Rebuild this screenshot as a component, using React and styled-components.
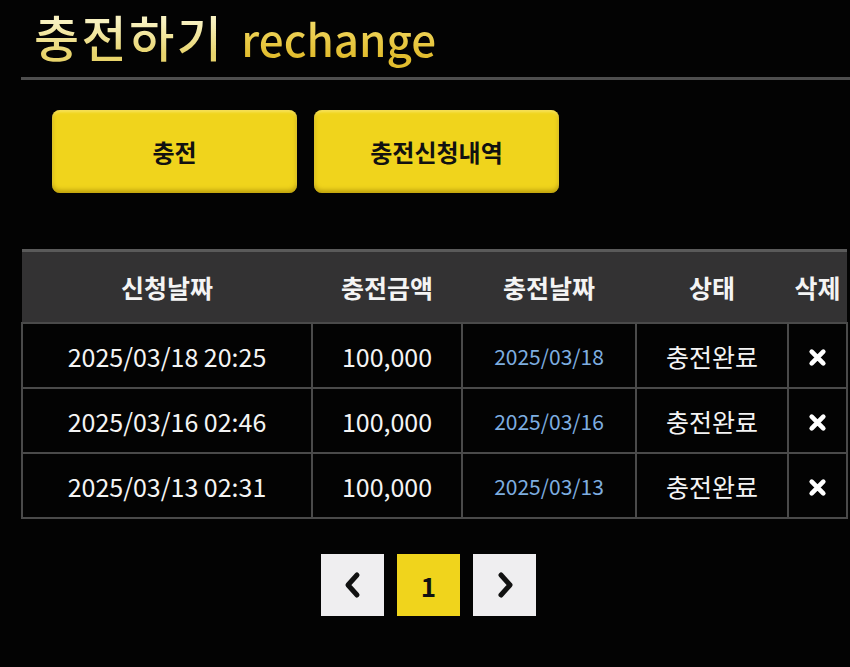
import React from "react";
import styled, { createGlobalStyle } from "styled-components";

const GlobalStyle = createGlobalStyle`
  html, body {
    margin: 0;
    padding: 0;
    background: #030303;
  }
  body {
    font-family: "Noto Sans CJK KR", "Noto Sans", sans-serif;
    color: #fff;
  }
`;

const Page = styled.div`
  width: 850px;
  min-height: 667px;
  background: #030303;
  overflow: hidden;
`;

const Header = styled.div`
  margin-left: 21px;
  padding: 0 0 3px 13px;
  border-bottom: 3px solid #4e4e4e;
`;

const Title = styled.h1`
  margin: 0;
  display: flex;
  align-items: baseline;
  gap: 17px;
  font-weight: 500;
  line-height: 72px;
`;

const TitleText = styled.span`
  font-size: ${(p) => p.$size};
  letter-spacing: ${(p) => p.$spacing || "0"};
  background: linear-gradient(180deg, ${(p) => p.$top} 30%, ${(p) => p.$bottom} 75%);
  -webkit-background-clip: text;
  background-clip: text;
  color: transparent;
`;

const ButtonRow = styled.div`
  display: flex;
  gap: 17px;
  padding: 30px 0 0 52px;
`;

const TabButton = styled.button`
  width: 245px;
  height: 83px;
  border: none;
  border-radius: 8px;
  background: #f0d41c;
  box-shadow: inset 0 -3px 4px rgba(150, 120, 0, 0.55), inset 0 2px 3px rgba(255, 240, 140, 0.6);
  color: #111;
  font-family: inherit;
  font-size: 24px;
  font-weight: 700;
  cursor: pointer;
`;

const Table = styled.table`
  margin: 56px 0 0 21px;
  width: 825px;
  border-collapse: collapse;
  table-layout: fixed;
`;

const HeadRow = styled.tr`
  background: #333233;
  border-top: 3px solid #5a5a5a;
`;

const Th = styled.th`
  height: 70px;
  padding: 0;
  font-size: 25px;
  font-weight: 700;
  color: #f4f4f4;
  text-align: center;
`;

const Td = styled.td`
  height: 63px;
  padding: 0;
  border: 2px solid #4a4a4a;
  text-align: center;
  color: ${(p) => (p.$accent ? "#7eaee0" : "#f4f4f4")};
  font-size: ${(p) => (p.$accent ? "21px" : "25px")};
`;

const Pager = styled.div`
  display: flex;
  justify-content: center;
  gap: 13px;
  margin-top: 35px;
  padding-left: 7px;
`;

const PageButton = styled.button`
  width: 63px;
  height: 62px;
  border: none;
  padding: 0;
  display: flex;
  align-items: center;
  justify-content: center;
  background: ${(p) => (p.$active ? "#f0d41c" : "#efeef0")};
  color: #111;
  font-family: inherit;
  font-size: 26px;
  font-weight: 700;
`;

const Chevron = ({ dir }) => (
  <svg width="24" height="30" viewBox="0 0 24 30">
    <path
      d={dir === "left" ? "M16 5 L7 15 L16 25" : "M8 5 L17 15 L8 25"}
      fill="none"
      stroke="#111"
      strokeWidth="5"
      strokeLinecap="round"
      strokeLinejoin="round"
    />
  </svg>
);

const DeleteIcon = () => (
  <svg width="19" height="19" viewBox="0 0 18 18">
    <path
      d="M3.5 3.5 L14.5 14.5 M14.5 3.5 L3.5 14.5"
      stroke="#fff"
      strokeWidth="4.4"
      strokeLinecap="round"
    />
  </svg>
);

const rows = [
  { requested: "2025/03/18 20:25", amount: "100,000", charged: "2025/03/18" },
  { requested: "2025/03/16 02:46", amount: "100,000", charged: "2025/03/16" },
  { requested: "2025/03/13 02:31", amount: "100,000", charged: "2025/03/13" },
];

export default function App() {
  return (
    <Page>
      <GlobalStyle />
      <Header>
        <Title>
          <TitleText $size="49px" $top="#f8f1c0" $bottom="#e8d46c" $spacing="2.5px">
            충전하기
          </TitleText>
          <TitleText $size="44px" $top="#f0d760" $bottom="#e2bd2e">
            rechange
          </TitleText>
        </Title>
      </Header>

      <ButtonRow>
        <TabButton>충전</TabButton>
        <TabButton>충전신청내역</TabButton>
      </ButtonRow>

      <Table>
        <colgroup>
          <col style={{ width: 290 }} />
          <col style={{ width: 150 }} />
          <col style={{ width: 174 }} />
          <col style={{ width: 152 }} />
          <col style={{ width: 59 }} />
        </colgroup>
        <thead>
          <HeadRow>
            <Th>신청날짜</Th>
            <Th>충전금액</Th>
            <Th>충전날짜</Th>
            <Th>상태</Th>
            <Th>삭제</Th>
          </HeadRow>
        </thead>
        <tbody>
          {rows.map((r) => (
            <tr key={r.requested}>
              <Td>{r.requested}</Td>
              <Td>{r.amount}</Td>
              <Td $accent>{r.charged}</Td>
              <Td>충전완료</Td>
              <Td>
                <DeleteIcon />
              </Td>
            </tr>
          ))}
        </tbody>
      </Table>

      <Pager>
        <PageButton>
          <Chevron dir="left" />
        </PageButton>
        <PageButton $active>1</PageButton>
        <PageButton>
          <Chevron dir="right" />
        </PageButton>
      </Pager>
    </Page>
  );
}
